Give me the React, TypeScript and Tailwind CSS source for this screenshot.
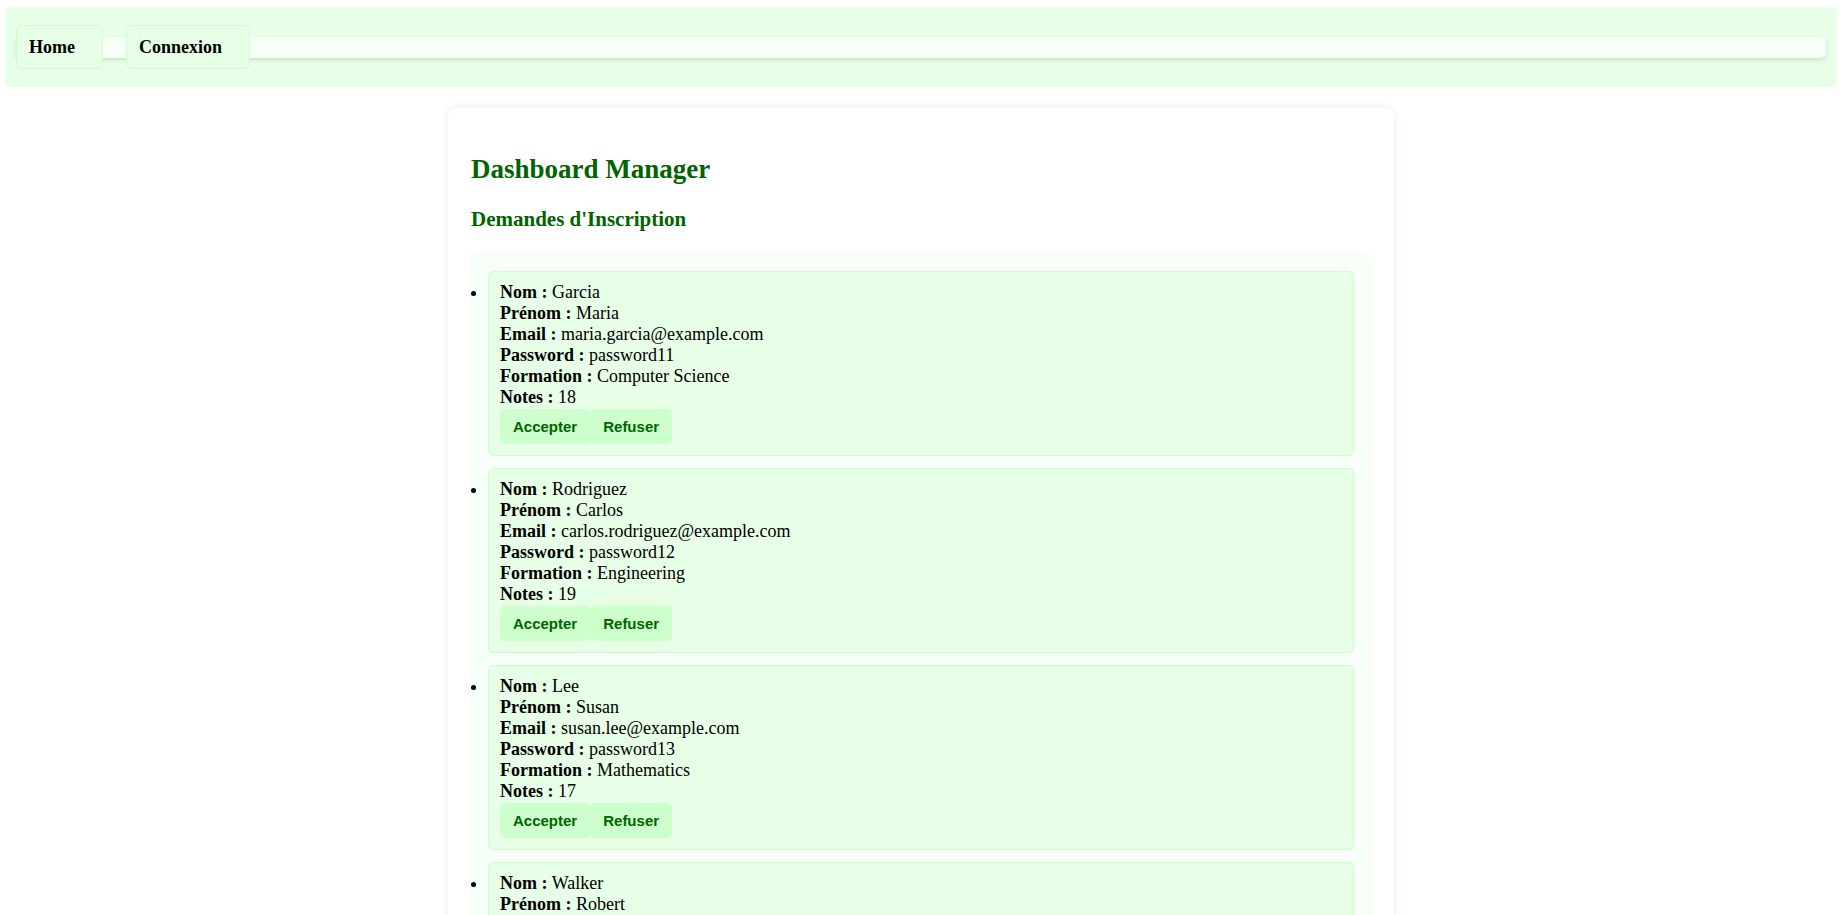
import React from 'react';

interface Demande {
  nom: string;
  prenom: string;
  email: string;
  password: string;
  formation: string;
  notes: number;
}

const demandes: Demande[] = [
  { nom: 'Garcia', prenom: 'Maria', email: 'maria.garcia@example.com', password: 'password11', formation: 'Computer Science', notes: 18 },
  { nom: 'Rodriguez', prenom: 'Carlos', email: 'carlos.rodriguez@example.com', password: 'password12', formation: 'Engineering', notes: 19 },
  { nom: 'Lee', prenom: 'Susan', email: 'susan.lee@example.com', password: 'password13', formation: 'Mathematics', notes: 17 },
  { nom: 'Walker', prenom: 'Robert', email: 'robert.walker@example.com', password: 'password14', formation: 'Physics', notes: 16 },
  { nom: 'Martin', prenom: 'Julie', email: 'julie.martin@example.com', password: 'password15', formation: 'Biology', notes: 15 },
];

const Navbar: React.FC = () => (
  <nav className="mx-[5px] mt-[7px] h-[80px] rounded-[5px] bg-[#e6ffe6] px-[11px] flex items-center">
    <ul className="flex-1 h-[21px] rounded-[5px] bg-[#f5fff5] shadow-[0_2px_4px_rgba(0,0,0,0.12)] flex items-center gap-[23px]">
      {['Home', 'Connexion'].map((label) => (
        <li
          key={label}
          className="h-[44px] flex items-center pl-[12px] pr-[27px] rounded-[5px] border border-[#ccffcc] bg-[#e6ffe6] font-bold text-[18px] text-black"
        >
          <a href="#">{label}</a>
        </li>
      ))}
    </ul>
  </nav>
);

const DemandeItem: React.FC<{ d: Demande }> = ({ d }) => (
  <li className="mb-[12px] rounded-[5px] border border-[#ccffcc] bg-[#e6ffe6] pt-[10px] pb-[11px] pl-[11px] pr-[10px]">
    <strong>Nom :</strong> {d.nom}
    <br />
    <strong>Prénom :</strong> {d.prenom}
    <br />
    <strong>Email :</strong> {d.email}
    <br />
    <strong>Password :</strong> {d.password}
    <br />
    <strong>Formation :</strong> {d.formation}
    <br />
    <strong>Notes :</strong> {d.notes}
    <div className="mt-[1px] flex font-['Liberation_Sans',Arial,sans-serif]">
      <button className="px-[13px] py-[9px] rounded-[5px] bg-[#ccffcc] text-[#006400] font-bold text-[15px] leading-[normal]">
        Accepter
      </button>
      <button className="px-[13px] py-[9px] rounded-[5px] bg-[#ccffcc] text-[#006400] font-bold text-[15px] leading-[normal]">
        Refuser
      </button>
    </div>
  </li>
);

export default function App() {
  return (
    <div className="min-h-screen bg-white text-black text-[18px] leading-[normal] font-['Liberation_Serif','Times_New_Roman',serif]">
      <Navbar />
      <div className="w-[946px] mx-auto mt-[21px] rounded-[8px] bg-white shadow-[0_0_10px_rgba(0,0,0,0.08)] pt-[24px] px-[23px] pb-[20px]">
        <h2 className="text-[27px] font-bold text-[#006400] my-[22px] leading-[normal]">Dashboard Manager</h2>
        <h3 className="text-[21px] font-bold text-[#006400] my-[21px] leading-[normal]">Demandes d'Inscription</h3>
        <ul className="list-disc rounded-[8px] bg-[#f8fff8] shadow-[0_0_6px_rgba(0,0,0,0.04)] pt-[18px] px-[17px] pb-[6px]">
          {demandes.map((d) => (
            <DemandeItem key={d.email} d={d} />
          ))}
        </ul>
      </div>
    </div>
  );
}
